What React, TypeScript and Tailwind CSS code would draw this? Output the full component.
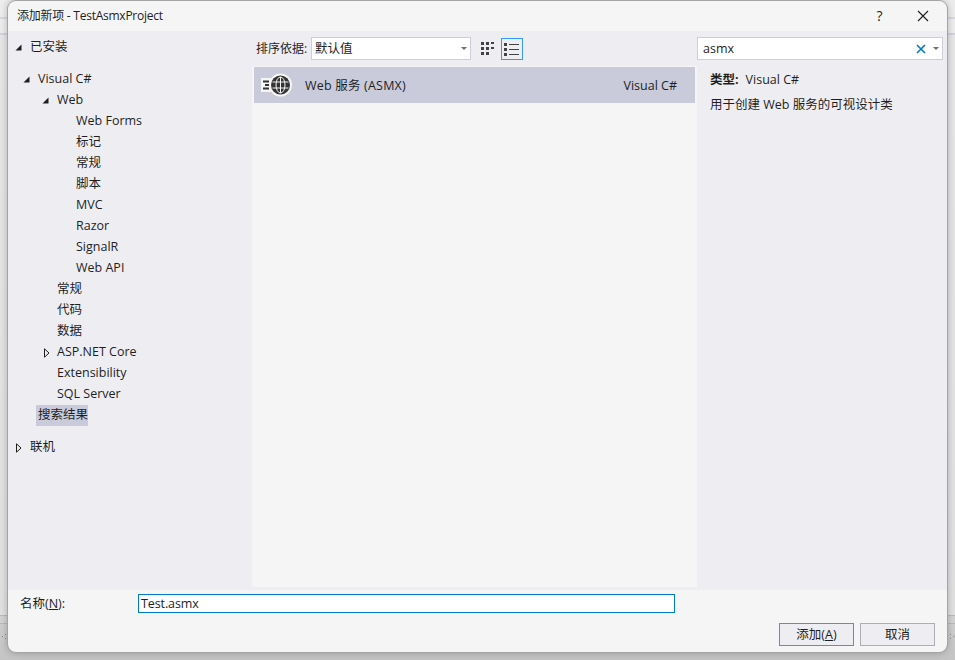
import React from "react";

const FONT = "font-['Open_Sans','Noto_Sans_CJK_SC',sans-serif]";

function Down() {
  return (
    <svg width="7" height="7" viewBox="0 0 7 7" className="shrink-0">
      <path d="M6.5 0.5V6.5H0.5Z" fill="#1e1e1e" />
    </svg>
  );
}
function Right() {
  return (
    <svg width="6" height="10" viewBox="0 0 6 10" className="shrink-0">
      <path d="M0.5 0.8L5 5L0.5 9.2Z" fill="#eeeef2" stroke="#1e1e1e" />
    </svg>
  );
}

type Node = { label: string; indent: string; icon?: "d" | "r"; sel?: boolean };

const tree: Node[] = [
  { label: "Visual C#", indent: "pl-[15px]", icon: "d" },
  { label: "Web", indent: "pl-[34px]", icon: "d" },
  { label: "Web Forms", indent: "pl-[68px]" },
  { label: "标记", indent: "pl-[68px]" },
  { label: "常规", indent: "pl-[68px]" },
  { label: "脚本", indent: "pl-[68px]" },
  { label: "MVC", indent: "pl-[68px]" },
  { label: "Razor", indent: "pl-[68px]" },
  { label: "SignalR", indent: "pl-[68px]" },
  { label: "Web API", indent: "pl-[68px]" },
  { label: "常规", indent: "pl-[49px]" },
  { label: "代码", indent: "pl-[49px]" },
  { label: "数据", indent: "pl-[49px]" },
  { label: "ASP.NET Core", indent: "pl-[36px]", icon: "r" },
  { label: "Extensibility", indent: "pl-[49px]" },
  { label: "SQL Server", indent: "pl-[49px]" },
  { label: "搜索结果", indent: "pl-[28px]", sel: true },
];

function Row({ n }: { n: Node }) {
  return (
    <div className={`h-[21px] flex items-center ${n.indent}`}>
      {n.icon === "d" && <span className="mr-[8px] flex"><Down /></span>}
      {n.icon === "r" && <span className="mr-[7px] flex"><Right /></span>}
      <span className={n.sel ? "bg-[#c9cbdb] w-[52px] pl-[2px] h-[21px] flex items-center" : ""}>{n.label}</span>
    </div>
  );
}

function Globe() {
  return (
    <svg width="34" height="26" viewBox="0 0 34 26">
      <rect x="1" y="6" width="14" height="14" fill="#f5f5f5" />
      <path d="M3 9.5h6M5 13h4M3 16.5h6" stroke="#333" strokeWidth="2" />
      <circle cx="20.5" cy="13" r="11.5" fill="#f5f5f5" />
      <circle cx="20.5" cy="13" r="9.5" fill="#333333" />
      <g stroke="#f5f5f5" strokeWidth="1" fill="none">
        <ellipse cx="20.5" cy="13" rx="4.5" ry="8" />
        <path d="M20.5 5v16M12.5 10h16M12.5 16h16" />
      </g>
    </svg>
  );
}

function Dots() {
  return (
    <svg width="8" height="5" viewBox="0 0 8 5" fill="#8c8c8c">
      <rect x="0" y="2" width="1" height="1" /><rect x="3" y="0" width="1" height="1" /><rect x="3" y="4" width="1" height="1" /><rect x="6" y="2" width="1" height="1" />
    </svg>
  );
}

export default function App() {
  return (
    <div className={`${FONT} relative w-[955px] h-[660px] overflow-hidden bg-[linear-gradient(to_bottom,#eeeeee_17px,#d8d8e2_17px,#d8d8e2_19px,#eeeeee_19px,#eeeeee_33px,#d4d4e0_33px,#d4d4e0_35px,#e8e8e8_35px,#e2e2e2_615px,#b8b8cc_615px,#b8b8cc_616px,#d4d4d4_616px,#d4d4d4_623px,#b8b8cc_623px,#b8b8cc_624px,#d0d0d0_624px,#c4c4c4_660px)] text-[12.5px] text-[#1e1e1e] pl-[8px] pt-[1px]`}>
      <span className="absolute left-[2px] top-[634px] flex"><Dots /></span>
      <span className="absolute left-[947px] top-[634px] flex"><Dots /></span>
      <div className="relative w-[939px] h-[651px] rounded-[8px] overflow-hidden bg-[#f5f5f5] flex flex-col shadow-[0_0_0_1px_#a4a4a4,0_0_8px_rgba(0,0,0,0.3)]">
        <div className="h-[30px] shrink-0 flex items-center pl-[9px]">
          <span className="flex-1 text-[12px] tracking-[-0.25px]">添加新项 - TestAsmxProject</span>
          <span className="w-[46px] text-center text-[14px] pl-[5px] pb-[2px]">?</span>
          <span className="w-[46px] flex justify-center mr-[1px] pb-[1px]">
            <svg width="12" height="12" viewBox="0 0 12 12"><path d="M1 1L11 11M11 1L1 11" stroke="#1e1e1e" strokeWidth="1.1" /></svg>
          </span>
        </div>
        <div className="h-[559px] shrink-0 bg-[#eeeef2] flex">
          <div className="w-[244px] shrink-0">
            <div className="h-[21px] mt-[6px] flex items-center pl-[7px]">
              <span className="mr-[8px] flex"><Down /></span>已安装
            </div>
            <div className="mt-[11px]">
              {tree.map((n, i) => <Row key={i} n={n} />)}
            </div>
            <div className="h-[21px] mt-[11px] flex items-center pl-[8px]">
              <span className="mr-[8px] flex"><Right /></span>联机
            </div>
          </div>
          <div className="w-[445px] shrink-0 flex flex-col">
            <div className="h-[35px] shrink-0 flex items-center">
              <span className="w-[59px] pl-[4px] text-[12px]">排序依据:</span>
              <div className="w-[160px] h-[23px] bg-white border border-[#ccced8] flex items-center pl-[3px] pr-[3px]">
                <span className="flex-1 pt-[1px]">默认值</span>
                <span className="w-0 h-0 border-x-[3px] border-x-transparent border-t-[3px] border-t-[#717171]" />
              </div>
              <div className="w-[22px] h-[22px] ml-[6px] flex items-center justify-center">
                <svg width="14" height="14" viewBox="0 0 14 14" fill="#424242">
                  <rect x="0" y="0" width="3" height="3" /><rect x="5" y="0" width="3" height="3" /><rect x="10" y="0" width="3" height="2" />
                  <rect x="0" y="5" width="3" height="3" /><rect x="5" y="5" width="3" height="3" /><rect x="10" y="5" width="3" height="2" />
                  <rect x="0" y="10" width="3" height="3" /><rect x="5" y="10" width="3" height="3" />
                </svg>
              </div>
              <div className="w-[22px] h-[22px] ml-[2px] border border-[#3399ff] flex items-center justify-center">
                <svg width="16" height="14" viewBox="0 0 16 14">
                  <rect x="0" y="1" width="3" height="3" fill="#424242" /><rect x="0" y="6" width="3" height="3" fill="#424242" /><rect x="0" y="11" width="3" height="3" fill="#424242" />
                  <path d="M5 2.5h10M5 7.5h10M5 12.5h10" stroke="#424242" />
                </svg>
              </div>
            </div>
            <div className="h-[521px] shrink-0 bg-[#f5f5f5] pt-[1px] px-[2px]">
              <div className="h-[36px] bg-[#c9cbdb] flex items-center">
                <span className="ml-[6px] flex"><Globe /></span>
                <span className="ml-[11px] flex-1 pt-[2px] tracking-[0.2px]">Web 服务 (ASMX)</span>
                <span className="mr-[18px] pt-[2px]">Visual C#</span>
              </div>
            </div>
          </div>
          <div className="flex-1 min-w-0">
            <div className="mt-[6px] w-[246px] h-[23px] bg-white border border-[#ccced8] flex items-center pl-[5px] pr-[3px]">
              <span className="flex-1 pt-[1px]">asmx</span>
              <svg width="10" height="10" viewBox="0 0 10 10"><path d="M1 1L9 9M9 1L1 9" stroke="#007acc" strokeWidth="1.6" /></svg>
              <span className="ml-[7px] w-0 h-0 border-x-[3px] border-x-transparent border-t-[3px] border-t-[#717171]" />
            </div>
            <div className="ml-[13px] mt-[10px] h-[21px] flex items-center">
              <span className="font-bold mr-[7px]">类型:</span>Visual C#
            </div>
            <div className="ml-[13px] mt-[4px] h-[21px] flex items-center">用于创建 Web 服务的可视设计类</div>
          </div>
        </div>
        <div className="flex-1 min-h-0 px-[12px]">
          <div className="h-[19px] mt-[4px] flex items-center">
            <span className="w-[118px] pt-[2px]">名称(<u>N</u>):</span>
            <div className="w-[537px] h-[19px] bg-white border border-[#007acc] flex items-center pl-[2px] pt-[1px] tracking-[-0.1px]">Test.asmx</div>
          </div>
          <div className="flex justify-end gap-[6px] mt-[10px]">
            <button className="w-[75px] h-[23px] bg-[#eeeef2] border border-[#3399ff] flex items-center justify-center pt-[1px]">添加(<u>A</u>)</button>
            <button className="w-[75px] h-[23px] bg-[#eeeef2] border border-[#aeaeb2] flex items-center justify-center pt-[1px]">取消</button>
          </div>
        </div>
      </div>
    </div>
  );
}
